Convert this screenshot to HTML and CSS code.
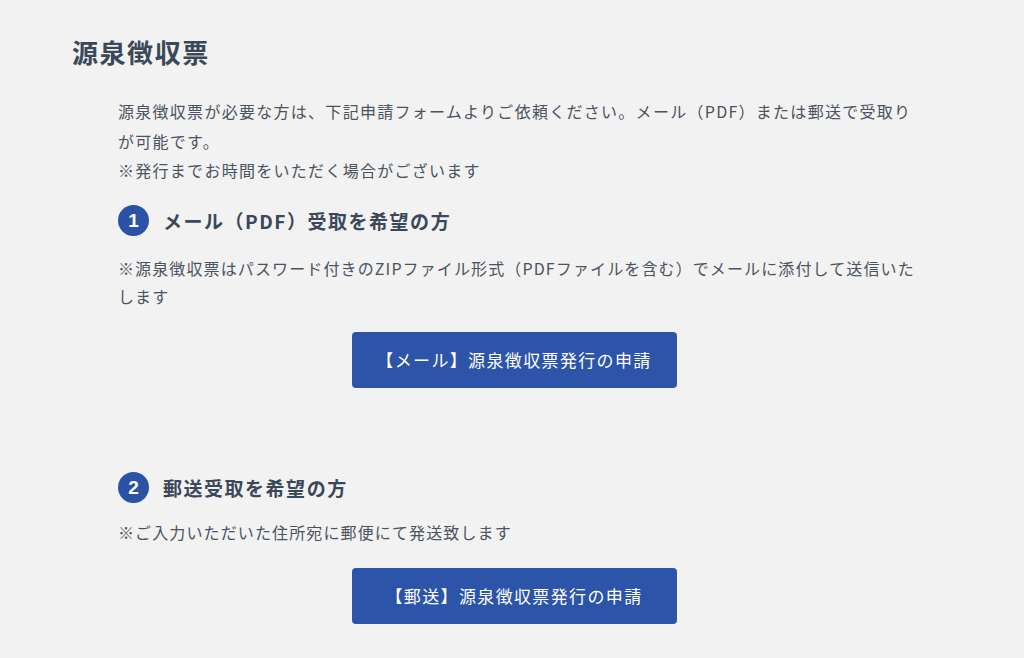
FILE: index.html
```html
<!DOCTYPE html>
<html lang="ja">
<head>
<meta charset="utf-8">
<title>源泉徴収票</title>
<link rel="stylesheet" href="styles.css">
</head>
<body>
<main class="page">
  <h1 class="page-title">源泉徴収票</h1>
  <div class="content">
    <p class="lead">源泉徴収票が必要な方は、下記申請フォームよりご依頼ください。メール（PDF）または郵送で受取りが可能です。<br>※発行までお時間をいただく場合がございます</p>

    <section class="option">
      <h2 class="option-title"><span class="num">1</span>メール（PDF）受取を希望の方</h2>
      <p class="note">※源泉徴収票はパスワード付きのZIPファイル形式（PDFファイルを含む）でメールに添付して送信いたします</p>
      <div class="actions"><a class="btn" href="#">【メール】源泉徴収票発行の申請</a></div>
    </section>

    <section class="option option-post">
      <h2 class="option-title"><span class="num">2</span>郵送受取を希望の方</h2>
      <p class="note">※ご入力いただいた住所宛に郵便にて発送致します</p>
      <div class="actions"><a class="btn" href="#">【郵送】源泉徴収票発行の申請</a></div>
    </section>
  </div>
</main>
</body>
</html>
```

FILE: styles.css
```css
html, body {
  margin: 0;
  padding: 0;
  background: #f2f2f2;
}

body {
  font-family: "Noto Sans CJK JP", "Noto Sans", sans-serif;
  color: #4a5461;
}

.page {
  padding: 30px 0 0 72px;
}

.page-title {
  margin: 0;
  font-size: 26px;
  line-height: 44px;
  font-weight: 700;
  letter-spacing: 0.06em;
  color: #3b4859;
}

.content {
  margin: 23px 0 0 46px;
  width: 806px;
}

.lead {
  margin: 0;
  font-size: 16px;
  line-height: 29.6px;
  letter-spacing: 0.08em;
}

.option {
  margin-top: 20px;
}

.option-post {
  margin-top: 85px;
}

.option-title {
  display: flex;
  align-items: center;
  gap: 14px;
  margin: 0;
  height: 30px;
  font-size: 19px;
  font-weight: 700;
  letter-spacing: 0.08em;
  color: #3b4859;
}

.num {
  display: flex;
  align-items: center;
  justify-content: center;
  width: 31px;
  height: 31px;
  border-radius: 50%;
  background: #2a53a6;
  color: #fff;
  font-family: "Liberation Sans", Arial, sans-serif;
  font-size: 19px;
  font-weight: 700;
  letter-spacing: 0;
}

.note {
  margin: 18px 0 0;
  font-size: 16px;
  line-height: 28px;
  letter-spacing: 0.07em;
}

.option-post .note {
  margin-top: 15px;
}

/* buttons sit centred in the 792px text column */
.actions {
  display: flex;
  justify-content: center;
  width: 792px;
  margin-top: 22px;
}

.btn {
  display: flex;
  align-items: center;
  justify-content: center;
  width: 325px;
  height: 56px;
  border-radius: 4px;
  background: #2c54a8;
  color: #fff;
  text-decoration: none;
  font-size: 17px;
  letter-spacing: 0.08em;
}
```
